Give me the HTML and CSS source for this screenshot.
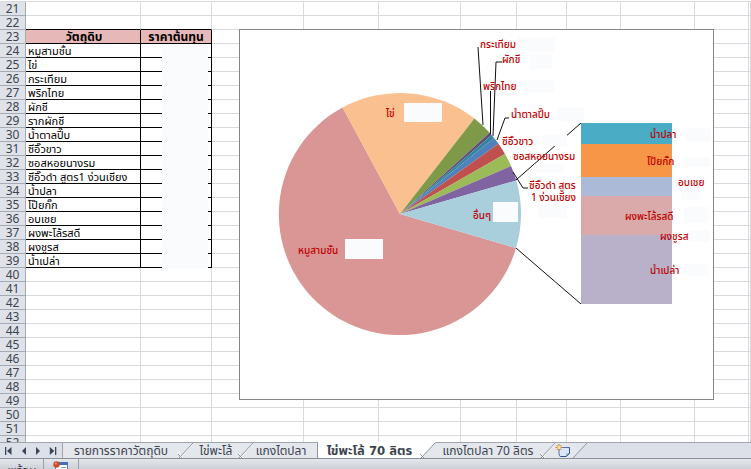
FILE: index.html
```html
<!DOCTYPE html>
<html lang="th">
<head>
    <meta charset="UTF-8">
    <meta name="viewport" content="width=device-width, initial-scale=1.0">
    <title>ไข่พะโล้ 70 ลิตร</title>
    <link rel="stylesheet" href="styles.css">
</head>
<body>
    <main class="sheet">
        <table class="grid">
            <colgroup>
                <col class="col-head"><col class="col-a"><col class="col-b"><col class="col-c">
                <col class="col-d"><col class="col-e"><col class="col-f"><col class="col-g">
                <col class="col-h"><col class="col-i"><col class="col-j"><col>
            </colgroup>
            <tbody id="rows"></tbody>
        </table>
        <div class="price-cover"></div>

        <svg class="chart" viewBox="239 29 475 371" role="img" aria-label="ราคาต้นทุน">
            <rect class="chart-area" x="239.5" y="29.5" width="474" height="370"/>

            <!-- pie -->
            <g class="slices">
                <path fill="#d99694" d="M400 214L516 248A121 121 0 1 1 342.6 107.5Z"/>
                <path fill="#fac090" d="M400 214L342.6 107.5A121 121 0 0 1 474.4 118.5Z"/>
                <path fill="#7e9a48" d="M400 214L474.4 118.5A121 121 0 0 1 489.7 132.8Z"/>
                <path fill="#604a7b" d="M400 214L489.7 132.8A121 121 0 0 1 491.6 134.9Z"/>
                <path fill="#31859c" d="M400 214L491.6 134.9A121 121 0 0 1 494 138Z"/>
                <path fill="#4f81bd" d="M400 214L494 138A121 121 0 0 1 498.5 143.7Z"/>
                <path fill="#c0504d" d="M400 214L498.5 143.7A121 121 0 0 1 505 154Z"/>
                <path fill="#9bbb59" d="M400 214L505 154A121 121 0 0 1 511 166Z"/>
                <path fill="#8064a2" d="M400 214L511 166A121 121 0 0 1 516.3 180.5Z"/>
                <path fill="#a9cedc" d="M400 214L516.3 180.5A121 121 0 0 1 516 248Z"/>
            </g>

            <!-- bar for the "other" slice -->
            <g class="bars">
                <rect fill="#4bacc6" x="581" y="123" width="91" height="21"/>
                <rect fill="#f79646" x="581" y="144" width="91" height="33"/>
                <rect fill="#aabad7" x="581" y="177" width="91" height="19"/>
                <rect fill="#d9aaa9" x="581" y="196" width="91" height="39"/>
                <rect fill="#b9b0ca" x="581" y="235" width="91" height="69"/>
            </g>

            <g class="lines">
                <path d="M516 180L581 123M516 248L581 304"/>
                <path d="M478 47L483 125M490.5 91V134M502 62H496L493 136M509 118H505L497 140M528 188H523L513 172"/>
            </g>

            <g class="covers">
                <rect x="404" y="103" width="38" height="19"/>
                <rect x="345" y="239" width="38" height="20"/>
                <rect x="493" y="202" width="25" height="20"/>
                <rect x="518" y="37" width="37" height="15"/>
                <rect x="529" y="54" width="23" height="15"/>
                <rect x="524" y="80" width="30" height="13"/>
                <rect x="558" y="107" width="26" height="14"/>
                <rect x="543" y="134" width="24" height="12"/>
                <rect x="534" y="164" width="30" height="9"/>
                <rect x="538" y="205" width="29" height="13"/>
                <rect x="686" y="128" width="25" height="14"/>
                <rect x="684" y="157" width="26" height="10"/>
                <rect x="681" y="190" width="20" height="10"/>
                <rect x="684" y="207" width="25" height="16"/>
                <rect x="688" y="230" width="22" height="12"/>
                <rect x="683" y="264" width="26" height="12"/>
            </g>

            <g class="labels">
                <text x="298" y="254">หมูสามชั้น</text>
                <text x="386" y="117">ไข่</text>
                <text x="480" y="48">กระเทียม</text>
                <text x="502" y="63">ผักชี</text>
                <text x="483" y="90">พริกไทย</text>
                <text x="511" y="118">น้ำตาลปี๊บ</text>
                <text x="502" y="145">ซีอิ๊วขาว</text>
                <text x="513" y="160">ซอสหอยนางรม</text>
                <text x="529" y="189">ซีอิ๊วดำ สูตร</text>
                <text x="531" y="201">1 ง่วนเชียง</text>
                <text x="473" y="219">อื่นๆ</text>
                <text x="650" y="138">น้ำปลา</text>
                <text x="647" y="165">โป๊ยกั๊ก</text>
                <text x="678" y="186">อบเชย</text>
                <text x="625" y="220">ผงพะโล้รสดี</text>
                <text x="660" y="240">ผงชูรส</text>
                <text x="650" y="274">น้ำเปล่า</text>
            </g>
        </svg>
    </main>

    <nav class="tabbar">
        <div class="tab-nav">
            <button type="button" aria-label="First sheet"><svg viewBox="0 0 8 8"><path d="M0 0h1.3v8H0zM6.5 0v8L2 4z"/></svg></button>
            <button type="button" aria-label="Previous sheet"><svg viewBox="0 0 8 8"><path d="M6 0v8L2 4z"/></svg></button>
            <button type="button" aria-label="Next sheet"><svg viewBox="0 0 8 8"><path d="M2 0v8l4-4z"/></svg></button>
            <button type="button" aria-label="Last sheet"><svg viewBox="0 0 8 8"><path d="M6 0h1.3v8H6zM.8 0v8l4.5-4z"/></svg></button>
        </div>
        <a class="tab tab-1" href="#">รายการราคาวัตถุดิบ</a>
        <svg class="slant" viewBox="0 0 14 15"><path class="slant-light" d="M1 15L14 1M-1 9L4 15"/><path class="slant-line" d="M0 15L14 0M-1 11L3 15"/></svg>
        <a class="tab tab-2" href="#">ไข่พะโล้</a>
        <svg class="slant" viewBox="0 0 14 15"><path class="slant-light" d="M1 15L14 1M-1 9L4 15"/><path class="slant-line" d="M0 15L14 0M-1 11L3 15"/></svg>
        <a class="tab tab-3" href="#">แกงไตปลา</a>
        <a class="tab tab-4 active" href="#">ไข่พะโล้ 70 ลิตร</a>
        <svg class="slant" viewBox="0 0 14 15"><path class="slant-white" d="M0 -1H14V0L0 15Z"/><path class="slant-line" d="M0 15L14 0M-1 11L3 15"/></svg>
        <a class="tab tab-5" href="#">แกงไตปลา 70 ลิตร</a>
        <svg class="slant" viewBox="0 0 14 15"><path class="slant-light" d="M1 15L14 1M-1 9L4 15"/><path class="slant-line" d="M0 15L14 0M-1 11L3 15"/></svg>
        <button class="new-tab" type="button" aria-label="Insert worksheet">
            <svg viewBox="0 0 16 14">
                <path d="M4 3.500H14.500V9L11 12.500H5L4 10Z" fill="#dce6fa" stroke="#5570ab"/>
                <path d="M14.500 3.500V9.500L11 12.500H6" stroke="#33508f"/>
                <path d="M11 12V9.500H14Z" fill="#8fa8dc"/>
                <path d="M4 0V7M.5 3.500H7.500M1.500 1L6.500 6M6.500 1L1.500 6" stroke="#c8892c"/>
                <circle cx="4" cy="3.500" r="1.500" fill="#ffeaa0"/>
            </svg>
        </button>
        <svg class="slant slant-end" viewBox="0 0 14 15"><path class="slant-fill" d="M0 0H14L0 15Z"/><path class="slant-line" d="M0 15L14 0"/></svg>
    </nav>

    <footer class="status">
        <span class="status-text">พร้อม</span>
        <button class="macro" type="button" aria-label="Record macro">
            <svg viewBox="0 0 16 16">
                <path d="M2.500 2.500h12v12h-12z" fill="#fff" stroke="#5a7fc0"/>
                <path d="M2 1h13v3H2z" fill="#3f6fc4"/>
                <path d="M8 6.500h5M8 9.500h5M4 9.500h2" stroke="#7f9fd4"/>
                <circle cx="3.500" cy="3.500" r="3.200" fill="#d1492d"/>
                <circle cx="2.800" cy="2.500" r="1" fill="#f3a58f"/>
            </svg>
        </button>
    </footer>

    <script>
        const FIRST_ROW = 21;
        const LAST_ROW = 52;
        const HEADER_ROW = 23;
        const COLUMNS = 11;
        const items = [
            'หมูสามชั้น', 'ไข่', 'กระเทียม', 'พริกไทย', 'ผักชี', 'รากผักชี',
            'น้ำตาลปี๊บ', 'ซีอิ๊วขาว', 'ซอสหอยนางรม', 'ซีอิ๊วดำ สูตร1 ง่วนเชียง',
            'น้ำปลา', 'โป๊ยกั๊ก', 'อบเชย', 'ผงพะโล้รสดี', 'ผงชูรส', 'น้ำเปล่า'
        ];

        const body = document.getElementById('rows');

        for (let n = FIRST_ROW; n <= LAST_ROW; n++) {
            const row = body.insertRow();
            const head = document.createElement('th');
            head.scope = 'row';
            head.textContent = n;
            row.appendChild(head);

            for (let c = 0; c < COLUMNS; c++) {
                row.insertCell();
            }

            const index = n - HEADER_ROW - 1;
            if (n === HEADER_ROW - 1) {
                row.className = 'before-title';
            } else if (n === HEADER_ROW) {
                row.className = 'filled title';
                row.cells[1].textContent = 'วัตถุดิบ';
                row.cells[2].textContent = 'ราคาต้นทุน';
            } else if (items[index]) {
                row.className = 'filled';
                row.cells[1].textContent = items[index];
            }
        }
    </script>
</body>
</html>
```

FILE: styles.css
```css
* {
    margin: 0;
    padding: 0;
    box-sizing: border-box;
}

body {
    display: flex;
    flex-direction: column;
    height: 100vh;
    overflow: hidden;
    background: #fff;
    color: #000;
    font-family: Tahoma, "Noto Sans", "Noto Sans Thai", sans-serif;
    font-size: 11px;
}

button {
    border: 0;
    background: none;
    font: inherit;
}

a {
    color: inherit;
    text-decoration: none;
}

svg {
    display: block;
}

/* Worksheet */
.sheet {
    position: relative;
    flex: 1;
    min-height: 0;
    overflow: hidden;
    padding-top: 1px;
}

.grid {
    width: 100%;
    table-layout: fixed;
    border-collapse: separate;
    border-spacing: 0;
    border-top: 1px solid #d8dade;
}

.col-head { width: 26px; }
.col-a { width: 115px; }
.col-b { width: 71px; }
.col-c { width: 92px; }
.col-d { width: 75px; }
.col-e { width: 82px; }
.col-f { width: 56px; }
.col-g { width: 50px; }
.col-h { width: 54px; }
.col-i { width: 74px; }
.col-j { width: 54px; }

.grid th,
.grid td {
    height: 14px;
    border-right: 1px solid #d8dade;
    border-bottom: 1px solid #d8dade;
    line-height: 13px;
    white-space: nowrap;
}

.grid th {
    background: #dfe3e9;
    border-color: #a5abb5;
    color: #3c4350;
    font-size: 12px;
    font-weight: 400;
}

.grid td:nth-child(2) {
    padding-left: 2px;
}

.filled td:nth-child(2),
.filled td:nth-child(3) {
    border-color: #000;
}

.before-title td:nth-child(2),
.before-title td:nth-child(3) {
    border-bottom-color: #000;
}

.title td:nth-child(2),
.title td:nth-child(3) {
    background: #e6b8b7;
    font-size: 12px;
    font-weight: 700;
    text-align: center;
}

.price-cover {
    position: absolute;
    left: 162px;
    top: 45px;
    width: 46px;
    height: 224px;
    background: #fafbfd;
}

/* Chart */
.chart {
    position: absolute;
    left: 239px;
    top: 29px;
    width: 475px;
    height: 371px;
}

.chart-area {
    fill: #fff;
    stroke: #868686;
}

.bars {
    shape-rendering: crispEdges;
}

.lines {
    fill: none;
    stroke: #111;
}

.covers {
    fill: #fafbfd;
}

.labels {
    fill: #c00000;
    font-size: 10px;
    font-weight: 500;
}

/* Sheet tabs */
.tabbar {
    display: flex;
    flex: none;
    height: 17px;
    background: #dce0e8;
    border-top: 1px solid #a0a5ae;
    border-bottom: 1px solid #8b9098;
    color: #3c4350;
    font-size: 12px;
}

.tab-nav {
    display: flex;
    align-items: center;
    justify-content: space-between;
    width: 63px;
    padding: 0 5px;
    border-right: 1px solid #a0a5ae;
}

.tab-nav svg {
    width: 8px;
    height: 8px;
    fill: #3c4656;
}

.tab {
    background: #e4e7ec;
    line-height: 15px;
    text-align: center;
    white-space: nowrap;
}

.tab-1 { width: 116px; }
.tab-2 { width: 46px; }
.tab-3 { width: 65px; padding-right: 8px; border-right: 1px solid #8f959f; }
.tab-4 { width: 103px; }
.tab-5 { width: 106px; }

.tab.active {
    margin-top: -1px;
    background: #fff;
    font-family: "DejaVu Sans Condensed", "Noto Sans Thai", sans-serif;
    font-size: 13px;
    font-weight: 700;
    line-height: 17px;
}

.slant {
    flex: none;
    width: 14px;
    height: 15px;
    background: #e4e7ec;
    overflow: visible;
}

.slant-end {
    background: none;
}

.slant-line {
    fill: none;
    stroke: #8f959f;
}

.slant-light {
    fill: none;
    stroke: #fff;
}

.slant-white {
    fill: #fff;
}

.slant-fill {
    fill: #e4e7ec;
}

.new-tab {
    width: 18px;
    background: #e4e7ec;
}

.new-tab svg {
    width: 16px;
    height: 14px;
    fill: none;
}

/* Status bar */
.status {
    display: flex;
    flex: none;
    height: 10px;
    overflow: hidden;
    background: linear-gradient(#e4e7eb, #cdd1d7);
    color: #3c4350;
}

.status-text {
    width: 44px;
    padding-left: 8px;
    border-right: 1px solid #9a9fa8;
    font-size: 12px;
    line-height: 24px;
}

.macro {
    width: 35px;
    height: 20px;
    padding: 2px 9px;
    border-right: 1px solid #9a9fa8;
}

.macro svg {
    width: 16px;
    height: 16px;
    fill: none;
}
```
